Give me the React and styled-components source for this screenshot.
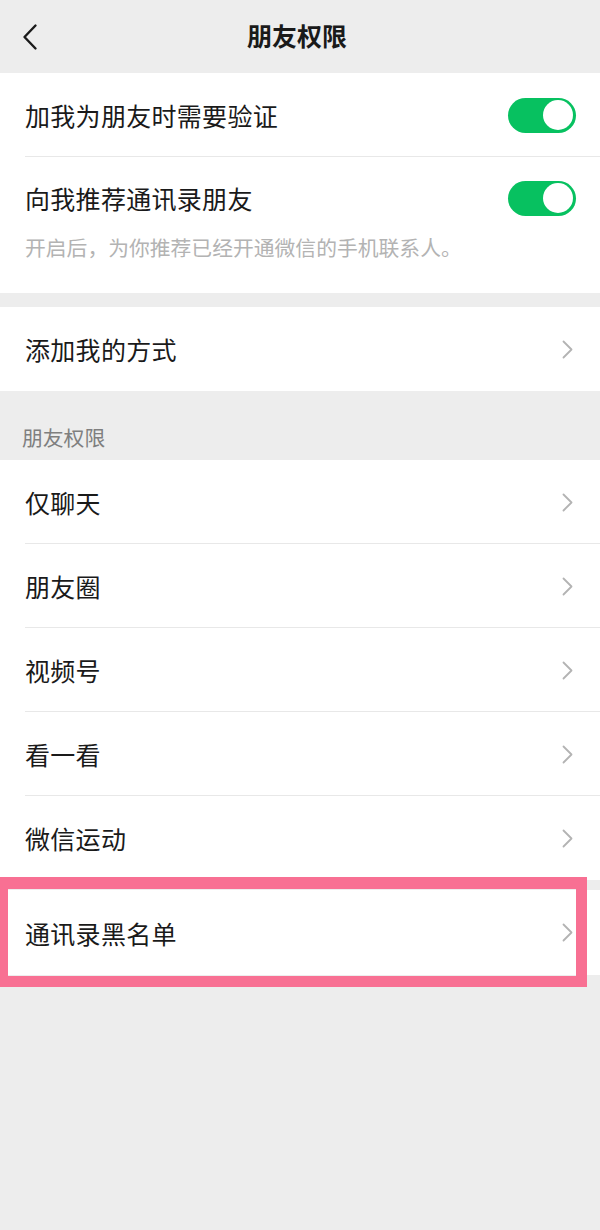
import React from "react";
import styled, { createGlobalStyle } from "styled-components";

const GlobalStyle = createGlobalStyle`
  html, body {
    margin: 0;
    padding: 0;
    background: #ededed;
    font-family: "Noto Sans CJK SC", "Noto Sans", sans-serif;
    -webkit-font-smoothing: antialiased;
  }
`;

const Page = styled.div`
  width: 600px;
  min-height: 1230px;
  background: #ededed;
  display: flex;
  flex-direction: column;
`;

const Header = styled.header`
  height: 73px;
  display: flex;
  align-items: center;
  justify-content: center;
  position: relative;
`;

const BackButton = styled.div`
  position: absolute;
  left: 21px;
  top: 23px;
  width: 18px;
  height: 28px;
  display: flex;
`;

const Title = styled.h1`
  margin: 0 6px 0 0;
  font-size: 25px;
  font-weight: 600;
  color: #1a1a1a;
  line-height: 1;
  padding-bottom: 2px;
`;

const Section = styled.section`
  background: #ffffff;
  margin-top: ${(p) => p.$gap || 0}px;
  position: relative;
`;

const Row = styled.div`
  height: ${(p) => p.$h || 84}px;
  display: flex;
  align-items: center;
  justify-content: space-between;
  padding: 0 24px 0 25px;
  box-sizing: border-box;
  position: relative;
  ${(p) =>
    p.$divider &&
    `
    &::after {
      content: "";
      position: absolute;
      left: 25px;
      right: 0;
      bottom: 0;
      height: 1px;
      background: #e8e8e8;
    }
  `}
`;

const Label = styled.span`
  font-size: 25px;
  color: #1a1a1a;
  line-height: 36px;
  letter-spacing: 0.3px;
`;

const DescBlock = styled.div`
  padding: 23px 24px 30px 25px;
`;

const DescTop = styled.div`
  display: flex;
  align-items: center;
  justify-content: space-between;
  height: 36px;
`;

const Desc = styled.p`
  margin: 15px 0 0;
  font-size: 20.8px;
  line-height: 32px;
  color: #b3b3b3;
`;

const Toggle = styled.div`
  width: 68px;
  height: 35px;
  border-radius: 18px;
  background: #07c160;
  position: relative;
  flex-shrink: 0;
  &::after {
    content: "";
    position: absolute;
    right: 3px;
    top: 2.5px;
    width: 30px;
    height: 30px;
    border-radius: 50%;
    background: #ffffff;
  }
`;

const GroupTitle = styled.div`
  padding: 31px 0 8px 22px;
  font-size: 20.8px;
  line-height: 30px;
  color: #7f7f7f;
`;

const Highlight = styled.div`
  position: absolute;
  left: 0;
  top: -13px;
  width: 587px;
  height: 110px;
  box-sizing: border-box;
  border-style: solid;
  border-color: #f87093;
  border-width: 12px 11px 11px 8px;
  pointer-events: none;
`;

const ChevronBox = styled.span`
  display: flex;
  margin-right: 2px;
`;

const Chevron = () => (
  <ChevronBox>
    <svg width="13" height="19" viewBox="0 0 13 19">
      <path
        d="M2.5 1.5 L10.5 9.5 L2.5 17.5"
        fill="none"
        stroke="#b3b3b3"
        strokeWidth="1.8"
        strokeLinecap="round"
        strokeLinejoin="round"
      />
    </svg>
  </ChevronBox>
);

const BackIcon = () => (
  <svg width="18" height="28" viewBox="0 0 18 28">
    <path
      d="M14.5 2.5 L3.5 14 L14.5 25.5"
      fill="none"
      stroke="#1a1a1a"
      strokeWidth="2.4"
      strokeLinecap="round"
      strokeLinejoin="round"
    />
  </svg>
);

const permissionItems = ["仅聊天", "朋友圈", "视频号", "看一看", "微信运动"];

export default function App() {
  return (
    <>
      <GlobalStyle />
      <Page>
        <Header>
          <BackButton>
            <BackIcon />
          </BackButton>
          <Title>朋友权限</Title>
        </Header>

        <Section>
          <Row $divider>
            <Label>加我为朋友时需要验证</Label>
            <Toggle />
          </Row>
          <DescBlock>
            <DescTop>
              <Label>向我推荐通讯录朋友</Label>
              <Toggle />
            </DescTop>
            <Desc>开启后，为你推荐已经开通微信的手机联系人。</Desc>
          </DescBlock>
        </Section>

        <Section $gap={14}>
          <Row>
            <Label>添加我的方式</Label>
            <Chevron />
          </Row>
        </Section>

        <GroupTitle>朋友权限</GroupTitle>

        <Section>
          {permissionItems.map((item, i) => (
            <Row key={item} $divider={i < permissionItems.length - 1}>
              <Label>{item}</Label>
              <Chevron />
            </Row>
          ))}
        </Section>

        <Section $gap={10}>
          <Row $h={85}>
            <Label>通讯录黑名单</Label>
            <Chevron />
          </Row>
          <Highlight />
        </Section>
      </Page>
    </>
  );
}
